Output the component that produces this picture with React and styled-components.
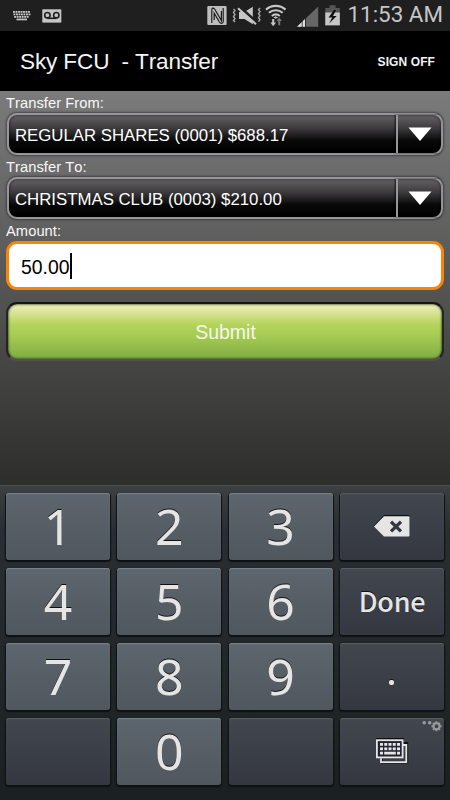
import React from 'react';
import styled, { createGlobalStyle } from 'styled-components';

const GlobalStyle = createGlobalStyle`
  * {
    box-sizing: border-box;
  }

  body {
    margin: 0;
    font-family: 'Liberation Sans', Arial, sans-serif;
    font-kerning: none;
  }
`;

const Screen = styled.div`
  width: 450px;
  height: 800px;
  display: flex;
  flex-direction: column;
  overflow: hidden;
  background: #000;
`;

const StatusBar = styled.div`
  height: 31px;
  flex: none;
  display: flex;
  align-items: flex-start;
  padding-right: 7px;
  background: #1f1f1f;
`;

const StatusIcon = styled.svg`
  display: block;
  flex: none;
  height: 31px;
  margin-left: ${(props) => props.$left || 0}px;
`;

const Clock = styled.span`
  margin-left: auto;
  font-family: Roboto, sans-serif;
  font-size: 22.4px;
  line-height: 28px;
  color: #c6c6c6;
  white-space: nowrap;
`;

const Header = styled.header`
  height: 60px;
  flex: none;
  display: flex;
  align-items: center;
  justify-content: space-between;
  padding: 2px 15px 0 20px;
  background: #000;
  color: #f4f4f4;
`;

const Title = styled.h1`
  margin: 0;
  font-size: 22.6px;
  font-weight: normal;
  letter-spacing: -0.15px;
  white-space: pre;
`;

const SignOff = styled.a`
  font-size: 12px;
  font-weight: bold;
  line-height: 16px;
  letter-spacing: 0.1px;
`;

const Form = styled.main`
  height: 394px;
  flex: none;
  display: flex;
  flex-direction: column;
  padding: 3px 6px 0;
  background: linear-gradient(#7b7b7b, #2d2e2c);
`;

const Label = styled.label`
  height: 19px;
  flex: none;
  font-size: 14.7px;
  line-height: 18px;
  letter-spacing: 0.06px;
  color: #f8f8f8;
`;

const Select = styled.div`
  height: 42px;
  flex: none;
  display: flex;
  margin: 0 1px 3px;
  border: 2px solid #97979b;
  border-radius: 10px;
  background: linear-gradient(#666266, #3c3a3c 35%, #080808 68%, #000);
  box-shadow: 0 0 2px 1px rgba(30, 30, 30, 0.5), inset 0 0 3px rgba(0, 0, 0, 0.7);
`;

const SelectValue = styled.span`
  flex: 1;
  padding-left: 6px;
  font-size: 16.8px;
  line-height: 41px;
  color: #fff;
  white-space: nowrap;
`;

const SelectArrow = styled.span`
  width: 45px;
  display: flex;
  align-items: center;
  justify-content: center;
  border-left: 2px solid #97979b;
  box-shadow: -1px 0 2px rgba(0, 0, 0, 0.7);
`;

const AmountField = styled.div`
  height: 49px;
  flex: none;
  display: flex;
  align-items: center;
  padding-left: 12px;
  border: 3px solid #f98508;
  border-radius: 11px;
  background: #fff;
  color: #000;
  font-size: 19.4px;
  line-height: 24px;
`;

const AmountValue = styled.span`
  padding-top: 2px;
`;

const Caret = styled.span`
  width: 2px;
  height: 26px;
  margin-top: 1px;
  background: #000;
`;

const SubmitButton = styled.button`
  height: 59px;
  flex: none;
  margin-top: 12px;
  padding: 2px 0 0 1px;
  border: 2px solid;
  border-color: #151515 #242526 #505153;
  border-radius: 11px;
  background: linear-gradient(#eef0bf, #d5e190 18%, #b3d358 38%, #a6cb54 58%, #80ac43);
  background-clip: padding-box;
  background-color: #252627;
  box-shadow: inset 0 0 2px 1px rgba(35, 50, 20, 0.6);
  font-family: inherit;
  font-size: 19.5px;
  color: #f6f7ec;
`;

const Keypad = styled.div`
  flex: 1;
  display: grid;
  grid-template-columns: repeat(4, 1fr);
  grid-auto-rows: 67px;
  gap: 8px 7.3px;
  padding: 7px 6px 0;
  border-top: 1px solid #4c5053;
  background: linear-gradient(#3c4043, #292e32 14%, #1a1f22);
`;

const Key = styled.button`
  position: relative;
  display: flex;
  align-items: center;
  justify-content: center;
  padding: 0;
  border: 0;
  border-radius: 3px;
  background: ${(props) =>
    props.$dark ? 'linear-gradient(#42474e, #343740)' : 'linear-gradient(#5d656e, #50575d)'};
  box-shadow: inset 0 1px 1px ${(props) => (props.$dark ? '#5b6065' : '#7c848b')},
    0 1px 1px 1px #0e1113;
  color: #e5e5e5;
  text-shadow: 0 -1px 0 #111;
`;

const Digit = styled.span`
  font-family: 'Noto Sans', sans-serif;
  font-size: 50px;
  line-height: 60px;
  padding-bottom: 2px;
`;

const Done = styled.span`
  font-family: 'Noto Sans CJK JP', 'Noto Sans', sans-serif;
  font-size: 27px;
  font-weight: 500;
  line-height: 40px;
  letter-spacing: -0.3px;
  padding-bottom: 1px;
`;

const Dot = styled.span`
  width: 5px;
  height: 5px;
  margin-top: 11px;
  border-radius: 2px;
  background: #e5e5e5;
  box-shadow: 0 -1px 0 #111;
`;

const KeySettings = styled.svg`
  position: absolute;
  top: 2px;
  right: 2px;
`;

const KeyboardStatusIcon = () => (
  <StatusIcon $left={12} width="20" viewBox="12 0 20 31" fill="#c6c6c6">
    {[13, 15.5, 18, 20.5, 23, 25.5, 28].map((x) => (
      <React.Fragment key={x}>
        <rect x={x} y="11" width="1.9" height="1.8" />
        <rect x={x + 0.5} y="13.5" width="1.9" height="1.8" />
        {x < 28 && <rect x={x + 1.2} y="16" width="1.9" height="1.8" />}
      </React.Fragment>
    ))}
    <rect x="16.5" y="18.6" width="10.5" height="1.7" />
  </StatusIcon>
);

const VoicemailIcon = () => (
  <StatusIcon $left={10} width="20" viewBox="42 0 20 31">
    <rect x="42.3" y="9.3" width="19" height="13.3" fill="#c6c6c6" />
    <g fill="none" stroke="#1f1f1f" strokeWidth="1.6">
      <circle cx="47.4" cy="15.2" r="2.7" />
      <circle cx="56.3" cy="15.2" r="2.7" />
      <path d="M47.4 18.3h9" />
    </g>
  </StatusIcon>
);

const NfcIcon = () => (
  <StatusIcon $left={145} width="20" viewBox="207 0 20 31">
    <rect x="207.3" y="6" width="19.3" height="19" rx="1" fill="#bdbdbd" />
    <path
      d="M211.8 23V10c0-2 1.6-2.5 2.8-1l6.8 11.5V11M214.2 20V13.2l5.2 8.8c1.8 2.4 3.8 1.2 3.8-.8V8"
      fill="none"
      stroke="#1f1f1f"
      strokeWidth="1.2"
    />
  </StatusIcon>
);

const VibrateMuteIcon = () => (
  <StatusIcon $left={5} width="30" viewBox="232 0 30 31">
    <g fill="none" stroke="#aaa" strokeWidth="1.4">
      <path d="M233.5 9l1.5 1.5-1.5 2 1.5 2-1.5 2 1.5 2-1.5 2 1.5 1.5M260 8l-1.5 1.7 1.5 2-1.5 2 1.5 2-1.5 2 1.5 2-1.5 2" />
    </g>
    <path d="M239 12h5.5l8.3-5.3v17.6l-8.3-5.3H239z" fill="#c6c6c6" />
    <path d="M239 6.3l18 16.5" stroke="#1f1f1f" strokeWidth="3" />
    <path d="M238 8.2l18 16" stroke="#c6c6c6" strokeWidth="2" />
  </StatusIcon>
);

const WifiIcon = () => (
  <StatusIcon $left={3} width="22" viewBox="265 0 22 31">
    <g fill="none" stroke="#c6c6c6" strokeWidth="2.1">
      <path d="M266 9.6c5.5-5 14-5 19.5 0M268.9 12.8c4-3.5 9.8-3.5 13.8 0M271.8 16c2.4-2 5.6-2 8 0" />
    </g>
    <path d="M273.5 17.5l2.2 1.3 2.3-1.3-2.3-1.2z" fill="#c6c6c6" />
    <path d="M272.2 19h2v3.4h1.8l-2.8 3.8-2.8-3.8h1.8z" fill="#c6c6c6" />
    <path d="M278.2 25.3V21h-1.8l2.8-3.6L282 21h-1.8v4.3z" fill="#777" />
  </StatusIcon>
);

const SignalIcon = () => (
  <StatusIcon $left={9} width="23" viewBox="296 0 23 31">
    <path d="M297 26.8L318.2 6.5v20.3z" fill="#666" />
    <path d="M297 26.8l8-7.8v7.8z" fill="#dedede" />
    <path d="M302.2 20v7M305.5 18v9" stroke="#1f1f1f" strokeWidth="0.8" />
  </StatusIcon>
);

const BatteryIcon = () => (
  <StatusIcon $left={5} width="18" viewBox="324 0 18 31">
    <path d="M325.3 8h4.2V5.3h6V8h4.3v17.3h-14.5z" fill="#555" />
    <path d="M325.3 12.5h14.5v12.8h-14.5z" fill="#c6c6c6" />
    <path d="M334 10l-5.5 7.5h3.7l-3 6 7.5-7.5h-3.7l3.2-6z" fill="#111" />
  </StatusIcon>
);

const DropArrow = () => (
  <svg width="24" height="14" viewBox="0 0 24 14">
    <path d="M0.5 0.5h23L12 14z" fill="#fff" />
  </svg>
);

const BackspaceIcon = () => (
  <svg width="38" height="23" viewBox="0 0 38 23">
    <path d="M1 10.5L11 0h24.5q1 0 1 1v18.5H11z" fill="#111" />
    <path d="M1 11.5L11 1.2h24.5q1 0 1 1v18.3q0 1-1 1H11z" fill="#e5e5e5" />
    <path d="M18 6.8l10 9.6M28 6.8l-10 9.6" stroke="#343940" strokeWidth="3.3" />
  </svg>
);

const KeyboardsIcon = () => (
  <svg width="34" height="27" viewBox="0 0 34 27">
    <path d="M28 5h4.2v19.6H7v-4" fill="none" stroke="#111" strokeWidth="2" />
    <path d="M27.5 7h3.8v17.2H6v-4" fill="none" stroke="#e5e5e5" strokeWidth="1.8" />
    <path d="M1 0h28v2H1z" fill="#111" />
    <rect x="1.9" y="2.2" width="25.7" height="17.2" fill="#202332" stroke="#e5e5e5" strokeWidth="1.8" />
    {[5, 9.25, 13.5, 17.75, 22].map((x) => (
      <React.Fragment key={x}>
        <rect x={x} y="5" width="3" height="2.8" fill="#e5e5e5" />
        <rect x={x} y="9.4" width="3" height="2.8" fill="#e5e5e5" />
      </React.Fragment>
    ))}
    <path d="M5 13.8h3v2.8H5zM9.2 13.8h11.6v2.8H9.2zM22 13.8h3v2.8h-3z" fill="#e5e5e5" />
  </svg>
);

const SettingsHint = () => (
  <KeySettings width="21" height="13" viewBox="0 0 21 13">
    <circle cx="3.2" cy="2.8" r="1.8" fill="#989a9e" />
    <circle cx="8.7" cy="2.8" r="1.8" fill="#989a9e" />
    <circle cx="15.5" cy="6.3" r="3" fill="none" stroke="#989a9e" strokeWidth="2" />
    <path
      d="M15.5 1.3v2M15.5 9.3v2M10.5 6.3h2M18.5 6.3h2M12 2.8l1.4 1.4M17.6 8.4L19 9.8M19 2.8l-1.4 1.4M13.4 8.4L12 9.8"
      stroke="#989a9e"
      strokeWidth="1.9"
    />
  </KeySettings>
);

const NumberKey = ({ value }) => (
  <Key>
    <Digit>{value}</Digit>
  </Key>
);

const App = () => {
  return (
    <>
      <GlobalStyle />
      <Screen>
        <StatusBar>
          <KeyboardStatusIcon />
          <VoicemailIcon />
          <NfcIcon />
          <VibrateMuteIcon />
          <WifiIcon />
          <SignalIcon />
          <BatteryIcon />
          <Clock>11:53 AM</Clock>
        </StatusBar>
        <Header>
          <Title>Sky FCU  - Transfer</Title>
          <SignOff>SIGN OFF</SignOff>
        </Header>
        <Form>
          <Label>Transfer From:</Label>
          <Select>
            <SelectValue>REGULAR SHARES (0001) $688.17</SelectValue>
            <SelectArrow>
              <DropArrow />
            </SelectArrow>
          </Select>
          <Label>Transfer To:</Label>
          <Select>
            <SelectValue>CHRISTMAS CLUB (0003) $210.00</SelectValue>
            <SelectArrow>
              <DropArrow />
            </SelectArrow>
          </Select>
          <Label>Amount:</Label>
          <AmountField>
            <AmountValue>50.00</AmountValue>
            <Caret />
          </AmountField>
          <SubmitButton>Submit</SubmitButton>
        </Form>
        <Keypad>
          <NumberKey value="1" />
          <NumberKey value="2" />
          <NumberKey value="3" />
          <Key $dark>
            <BackspaceIcon />
          </Key>
          <NumberKey value="4" />
          <NumberKey value="5" />
          <NumberKey value="6" />
          <Key $dark>
            <Done>Done</Done>
          </Key>
          <NumberKey value="7" />
          <NumberKey value="8" />
          <NumberKey value="9" />
          <Key $dark>
            <Dot />
          </Key>
          <Key $dark />
          <NumberKey value="0" />
          <Key $dark />
          <Key $dark>
            <SettingsHint />
            <KeyboardsIcon />
          </Key>
        </Keypad>
      </Screen>
    </>
  );
};

export default App;
